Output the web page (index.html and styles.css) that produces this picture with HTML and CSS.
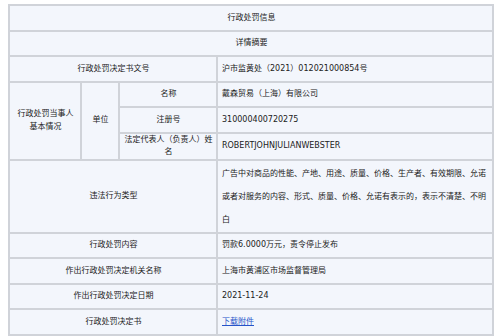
FILE: index.html
```html
<!DOCTYPE html>
<html lang="zh-CN">
<head>
<meta charset="utf-8">
<title>行政处罚信息</title>
<link rel="stylesheet" href="styles.css">
</head>
<body>
<table class="info">
  <colgroup>
    <col class="c1"><col class="c2"><col class="c3"><col class="c4">
  </colgroup>
  <tr><td colspan="4" class="center">行政处罚信息</td></tr>
  <tr><td colspan="4" class="center">详情摘要</td></tr>
  <tr><td colspan="3" class="center">行政处罚决定书文号</td><td>沪市监黄处（2021）012021000854号</td></tr>
  <tr>
    <td rowspan="3" class="center">行政处罚当事人基本情况</td>
    <td rowspan="3" class="center">单位</td>
    <td class="center">名称</td>
    <td>戴森贸易（上海）有限公司</td>
  </tr>
  <tr><td class="center">注册号</td><td>310000400720275</td></tr>
  <tr><td class="center">法定代表人（负责人）姓名</td><td>ROBERTJOHNJULIANWEBSTER</td></tr>
  <tr class="tall">
    <td colspan="3" class="center">违法行为类型</td>
    <td class="long">广告中对商品的性能、产地、用途、质量、价格、生产者、有效期限、允诺或者对服务的内容、形式、质量、价格、允诺有表示的，表示不清楚、不明白</td>
  </tr>
  <tr><td colspan="3" class="center">行政处罚内容</td><td>罚款6.0000万元，责令停止发布</td></tr>
  <tr><td colspan="3" class="center">作出行政处罚决定机关名称</td><td>上海市黄浦区市场监督管理局</td></tr>
  <tr><td colspan="3" class="center">作出行政处罚决定日期</td><td>2021-11-24</td></tr>
  <tr><td colspan="3" class="center">行政处罚决定书</td><td><a class="link" href="#">下载附件</a></td></tr>
</table>
</body>
</html>
```
FILE: styles.css
```css
html, body {
  margin: 0;
  padding: 0;
  background: #ffffff;
}
body {
  padding: 4px 8px;
  font-family: "DejaVu Sans", "Noto Sans CJK SC", sans-serif;
  font-size: 8px;
  color: #222222;
}
.info {
  width: 484px;
  table-layout: fixed;
  border-collapse: collapse;
  background: #f3f6fc;
}
.c1 { width: 72px; }
.c2 { width: 38px; }
.c3 { width: 98px; }
.c4 { width: 276px; }
.info tr {
  height: 25.5px;
}
.info td {
  border: 2px solid #d0d3d9;
  padding: 0 3px 0 4px;
  line-height: 12.5px;
  vertical-align: middle;
  text-align: left;
  word-break: break-all;
}
.info td.center {
  text-align: center;
}
.info tr.tall {
  height: 73px;
}
.info td.long {
  line-height: 23px;
  padding-top: 1px;
  padding-bottom: 1px;
}
.link {
  color: #2653c9;
  text-decoration: underline;
}
```
